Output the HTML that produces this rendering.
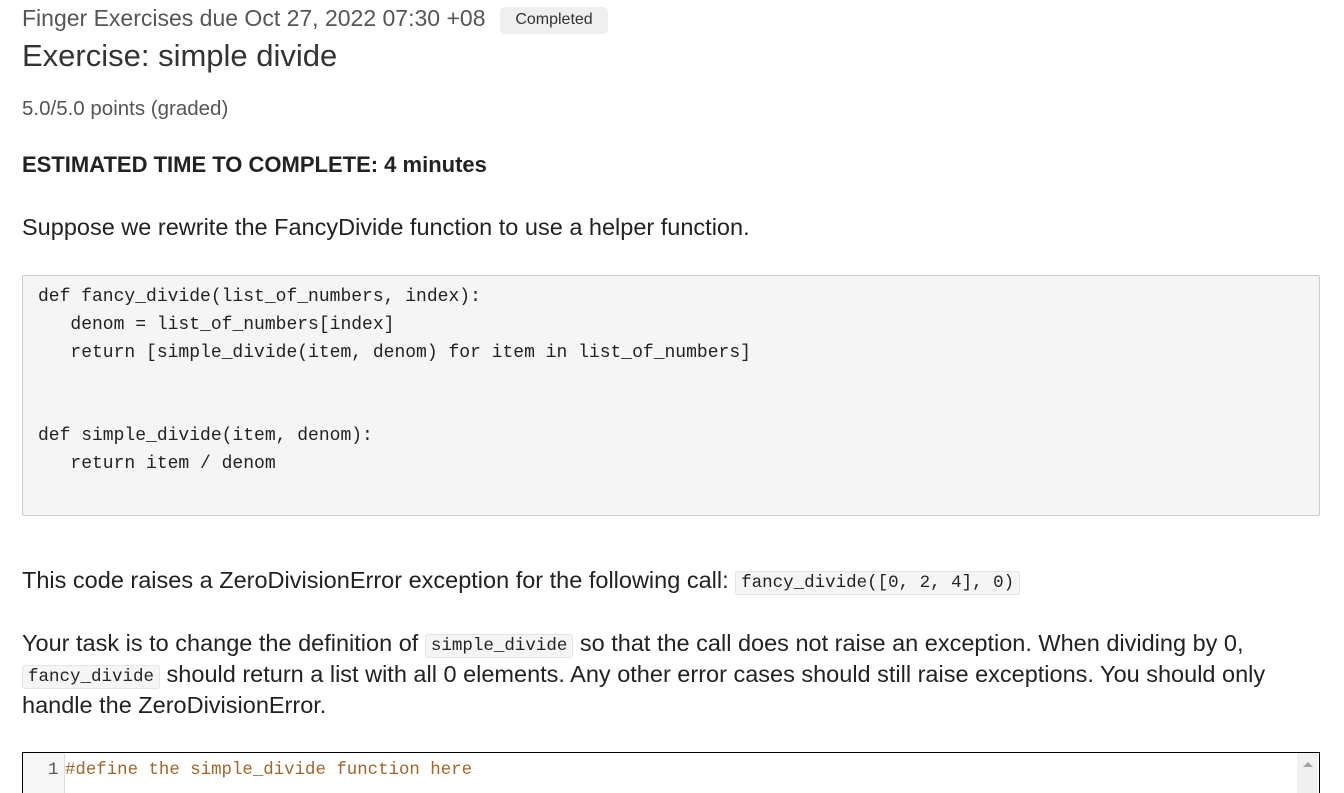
<!DOCTYPE html>
<html><head><meta charset="utf-8"><style>
body{margin:0;background:#fff;font-family:"Liberation Sans",sans-serif;color:#222;}
.abs{position:absolute;white-space:nowrap}
.mono{font-family:"Liberation Mono",monospace}
code{font-family:"Liberation Mono",monospace;font-size:17.5px;line-height:1;background:#f5f5f5;border:1px solid #e4e4e4;border-radius:3px;padding:1px 5px;vertical-align:1px}
</style></head><body>
<div class="abs" style="left:22px;top:5px;font-size:23px;color:#555">Finger Exercises due Oct 27, 2022 07:30 +08</div>
<div class="abs" style="left:500px;top:7px;width:108px;height:27px;background:#efefef;border-radius:5px;font-size:16px;color:#333;line-height:25px;text-align:center">Completed</div>
<div class="abs" style="left:22px;top:38px;font-size:31px;color:#333">Exercise: simple divide</div>
<div class="abs" style="left:22px;top:97px;font-size:20.5px;color:#555">5.0/5.0 points (graded)</div>
<div class="abs" style="left:22px;top:152px;font-size:22px;font-weight:bold;color:#222">ESTIMATED TIME TO COMPLETE: 4 minutes</div>
<div class="abs" style="left:22px;top:214px;font-size:23.5px">Suppose we rewrite the FancyDivide function to use a helper function.</div>
<div class="abs" style="left:22px;top:275px;width:1296px;height:239px;background:#f5f5f5;border:1px solid #ccc;border-radius:2px"></div>
<pre class="abs mono" style="white-space:pre;left:38px;top:284px;margin:0;font-size:18px;line-height:27.8px;color:#222">def fancy_divide(list_of_numbers, index):
   denom = list_of_numbers[index]
   return [simple_divide(item, denom) for item in list_of_numbers]


def simple_divide(item, denom):
   return item / denom</pre>
<div class="abs" style="left:22px;top:567px;font-size:23.5px">This code raises a ZeroDivisionError exception for the following call: <code>fancy_divide([0, 2, 4], 0)</code></div>
<div class="abs" style="left:22px;top:628px;width:1300px;white-space:normal;font-size:23.5px;line-height:31px">Your task is to change the definition of <code>simple_divide</code> so that the call does not raise an exception. When dividing by 0, <code>fancy_divide</code> should return a list with all 0 elements. Any other error cases should still raise exceptions. You should only handle the ZeroDivisionError.</div>
<div class="abs" style="left:22px;top:752px;width:1296px;height:40px;border:1px solid #000;border-bottom:none"></div>
<div class="abs" style="left:23px;top:753px;width:41px;height:40px;background:#f7f7f7;border-right:1px solid #ddd"></div>
<div class="abs" style="left:1297px;top:753px;width:21px;height:40px;background:#f0f0f0"></div>
<div class="abs" style="left:1303px;top:762px;width:0;height:0;border-left:5px solid transparent;border-right:5px solid transparent;border-bottom:5px solid #a3a3a3"></div>
<div class="abs mono" style="left:48px;top:761px;font-size:17.4px;color:#555">1</div>
<div class="abs mono" style="left:65px;top:761px;font-size:17.4px;color:#a0662a">#define the simple_divide function here</div>
</body></html>
